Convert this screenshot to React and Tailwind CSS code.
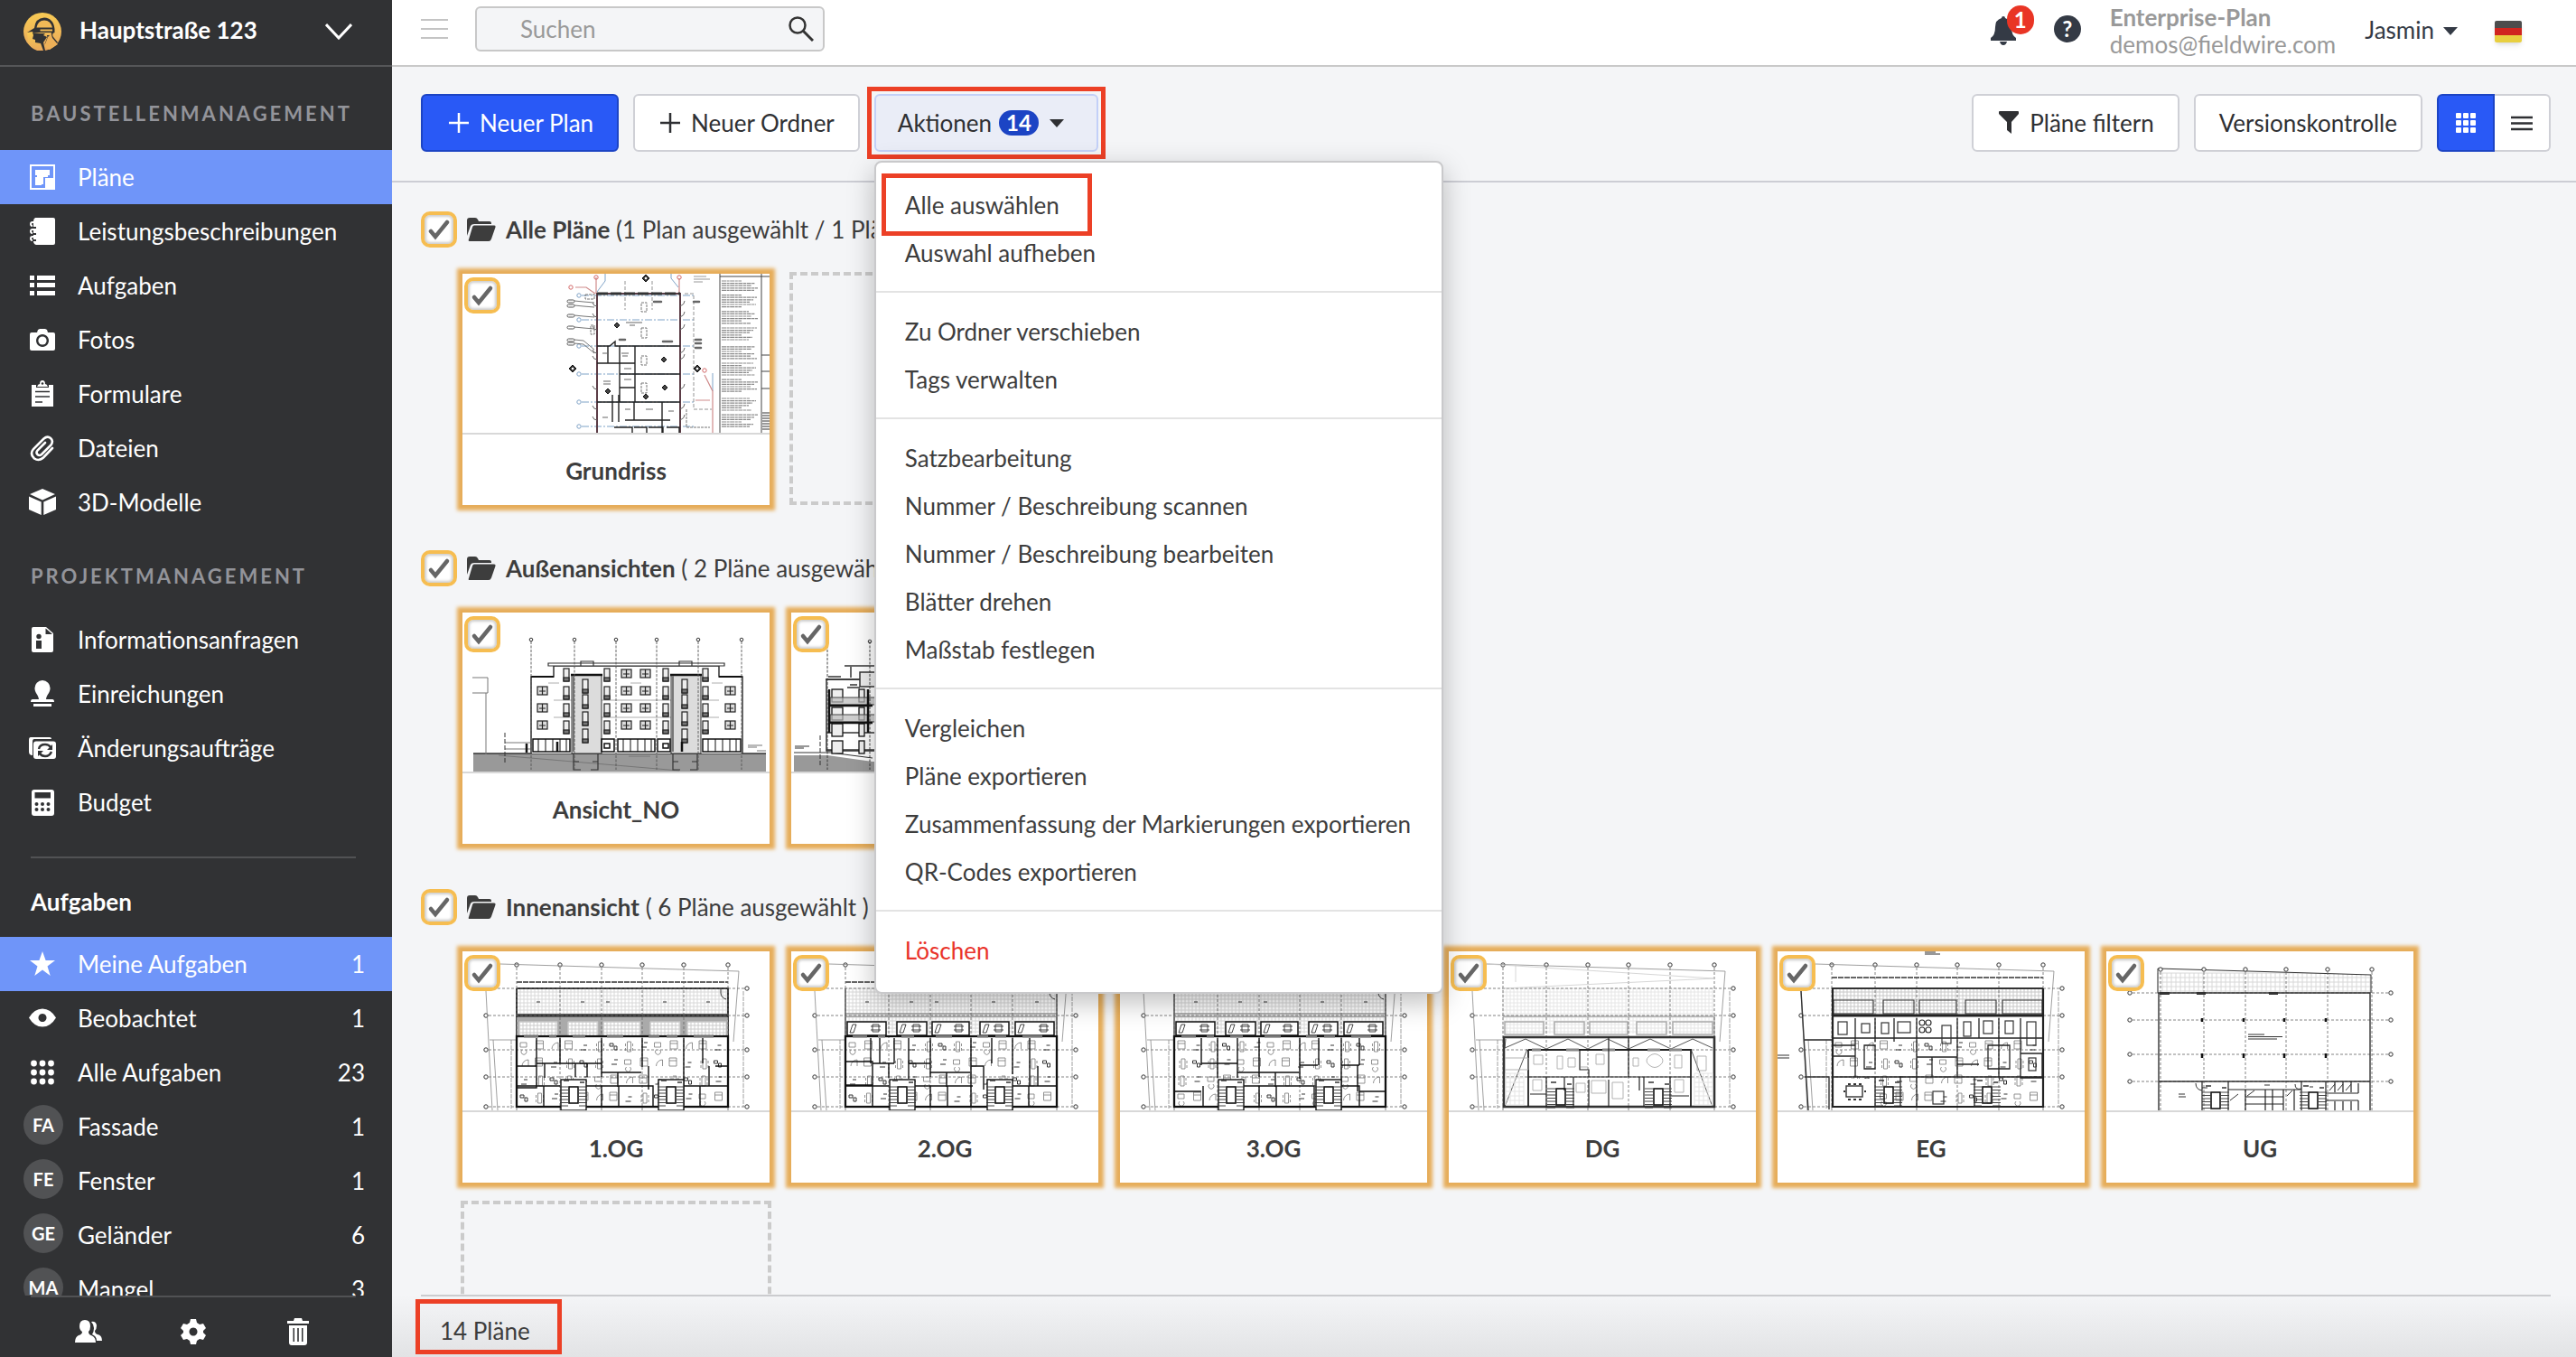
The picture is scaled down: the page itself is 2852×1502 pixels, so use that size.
import React, { useState } from "react";
import clsx from "clsx";

/* ---------- Icons ---------- */

function Icon({ children, className = "w-8 h-8" }) {
  return (
    <svg viewBox="0 0 32 32" fill="currentColor" className={clsx("shrink-0", className)} aria-hidden="true">
      {children}
    </svg>
  );
}

const PlansIcon = () => (
  <Icon>
    <path fillRule="evenodd" d="M2 2h28v28H2zM4 4v24h24V4z" />
    <path d="M8 8h16v6h-2v2h-5v8h-2v1H8v-9h2v-2H8zM19 28V17h10v12H17v-1z" />
  </Icon>
);

const SpecsIcon = () => (
  <Icon>
    <path d="M8 1h20q2 0 2 2v26q0 2-2 2H9q-3-1-3-4h3v-2H6v-5h3v-2H6v-5h3v-2H6V5q0-3 2-4z" />
    <path d="M9 6H5q-2 0-2 2t2 2M9 14H5q-2 0-2 2t2 2M9 22H5q-2 0-2 2t2 2" fill="none" stroke="currentColor" strokeWidth="2" />
  </Icon>
);

const TasksIcon = () => (
  <Icon>
    <path d="M2 5h5v5H2zM10 5h20v5H10zM2 13h5v5H2zM10 13h20v5H10zM2 22h5v5H2zM10 22h20v5H10z" />
  </Icon>
);

const CameraIcon = () => (
  <Icon>
    <path fillRule="evenodd" d="M4 8h6l1-3 2-1h6l2 1 1 3h6q2 0 2 2v16q0 2-2 2H4q-2 0-2-2V10q0-2 2-2zM16 10a7 7 0 1 0 .01 0z" />
    <circle cx="16" cy="17" r="4.6" />
  </Icon>
);

const FormsIcon = () => (
  <Icon>
    <path d="M4 6h5v3h14V6h5v24H4z" />
    <path d="M8 13.500h16M8 19h16M8 25h8" stroke="#313234" strokeWidth="1.600" />
    <path d="M10 8q1-3 3-3 0-4 3-4t3 4q2 0 3 3z" />
    <circle cx="16" cy="4.500" r="1.300" fill="#313234" />
  </Icon>
);

const ClipIcon = () => (
  <Icon>
    <path
      d="M27 16 17 26.500q-5 4.500-10 1-5.500-5-1-10.500L17.500 5.500q4-3.500 7.500-.500t.500 7.500L15 23q-2.500 2-4.500 0t0-4.500l8.500-8.500"
      fill="none"
      stroke="currentColor"
      strokeWidth="2.6"
      strokeLinecap="round"
    />
  </Icon>
);

const CubeIcon = () => (
  <Icon>
    <path d="M16 1 30 7 16 13.500 2 7zM1 9.500 14.700 15.500V30L1 24zM31 9.500 17.300 15.500V30L31 24z" />
  </Icon>
);

const InfoFileIcon = () => (
  <Icon>
    <path fillRule="evenodd" d="M6 2h14l8 7v19q0 2-2 2H6q-2 0-2-2V4q0-2 2-2zM19.500 3.500V10H27zM9 17h6v9H9z" />
    <circle cx="12" cy="12.500" r="2.700" fill="#313234" />
  </Icon>
);

const StampIcon = () => (
  <Icon>
    <path d="M16 1a8.500 8.500 0 0 1 8.500 9c0 5-4 7-4.500 12h7q2 0 2 3H3q0-3 2-3h7c-.5-5-4.500-7-4.500-12A8.500 8.500 0 0 1 16 1zM6 27h20v3H6z" />
  </Icon>
);

const ChangeIcon = () => (
  <Icon>
    <path d="M3 4h21q2 0 2 2H7Q5 6 5 9v15q-4 0-4-4V7q0-3 2-3z" />
    <rect x="6" y="8.500" width="25" height="19.500" rx="3" />
    <path d="M12 17q1-5 7-5 4 0 6 3M26 20q-2 5-7 5-4 0-6-3" fill="none" stroke="#313234" strokeWidth="2.400" />
    <path d="M27 12v6h-6zM11 25v-6h6z" fill="#313234" />
  </Icon>
);

const BudgetIcon = () => (
  <Icon>
    <rect x="4" y="2" width="25" height="29" rx="3" />
    <path d="M7.500 5h17.500v6.500H7.500z" fill="#313234" />
    {[18, 24].map((y) => [9.500, 16, 22.500].map((x) => <circle key={x + "-" + y} cx={x} cy={y} r="2" fill="#313234" />))}
  </Icon>
);

const StarIcon = () => (
  <Icon>
    <path d="m16 2 3.600 10H30l-8.500 6.500 3.200 10.500L16 22.500 7.300 29l3.200-10.500L2 12h10.400z" />
  </Icon>
);

const EyeIcon = () => (
  <Icon>
    <path fillRule="evenodd" d="M1 15.500Q7 5.500 16 5.500t15 10Q25 25.500 16 25.500t-15-10zM16 11a4.500 4.500 0 1 0 .01 0z" />
  </Icon>
);

const DotsIcon = () => (
  <Icon>
    {[6, 16, 26].map((y) => [6.500, 16, 25.500].map((x) => <circle key={x + "-" + y} cx={x} cy={y} r="3.400" />))}
  </Icon>
);

const FolderIcon = () => (
  <svg viewBox="0 0 32 26" className="w-8 h-[26px] shrink-0" fill="currentColor" aria-hidden="true">
    <path d="M0 20V3q0-3 3-3h6q2 0 3 2l1 2h12q2 0 2 2v1H8q-3 0-4 2zM8 8.500h22q2 0 1.500 2L27 23.500q-1 2.500-3 2.500H3q-2 0-1-2L6 10.500q.5-2 2-2z" />
  </svg>
);

const Logo = () => (
  <svg viewBox="0 0 42 42" className="w-[42px] h-[42px] shrink-0" aria-hidden="true">
    <defs>
      <linearGradient id="logoFill" x1="0" y1="0" x2="0" y2="1" gradientUnits="objectBoundingBox">
        <stop offset="0" stopColor="#f8cb54" />
        <stop offset="1" stopColor="#e9a75b" />
      </linearGradient>
    </defs>
    <circle cx="21" cy="21" r="21" fill="url(#logoFill)" />
    {/* helmet and face */}
    <path d="M4 22l8-5Q13 6 23 5.500q10 .5 11.500 12.500v4l-2 1-1 6-5 7-3-1 3-8-1-3H13q-2 0-3-3-2 0-6 1z" fill="#313234" />
    <path d="M14.500 16.500Q16 8.500 23 8.500t9 8zM18.500 18.500H32v2H18.500zM13 22h18l-1 3h-4l-3 2 1 3-3 3-8-5z" fill="#f0b957" />
    <path d="M4 22h9v10l8 1 1 5-3 5q-11-2-14-10z" fill="url(#logoFill)" />
    <path d="M10 22l1 3-1 4 3 1v3l6 1 3 8h2l-2-9 4-6-4-2 2-2h-6z" fill="#313234" />
    <path d="M27 27l4-4 1 5 6 7-9 6-6-4z" fill="#edb058" />
    <path d="M31 23l1 5 5 6 1-1-5-6z" fill="#313234" />
  </svg>
);

const Caret = ({ className }) => (
  <svg viewBox="0 0 16 9" className={clsx("w-4 h-[9px] shrink-0", className)} fill="currentColor" aria-hidden="true">
    <path d="M0 0h16L8 9z" />
  </svg>
);

const Plus = () => (
  <svg viewBox="0 0 22 22" className="w-[22px] h-[22px] shrink-0" stroke="currentColor" strokeWidth="2.500" aria-hidden="true">
    <path d="M11 0v22M0 11h22" />
  </svg>
);

/* ---------- Plan drawings (340 x 176) ---------- */

const rectPath = (x, y, w, h) => `M${x} ${y}h${w}v${h}h${-w}z`;

function Sheet({ children }) {
  return (
    <svg viewBox="0 0 340 176" className="block w-full" fill="none" stroke="#333" strokeWidth="1" aria-hidden="true">
      {children}
    </svg>
  );
}

function Hatch({ x, y, w, h, step = 4, color = "#d8d8d8" }) {
  let d = "";
  for (let i = x; i <= x + w; i += step) d += `M${i} ${y}v${h}`;
  for (let j = y; j <= y + h; j += step) d += `M${x} ${j}h${w}`;
  return <path d={d} stroke={color} strokeWidth="1" />;
}

const AXES_X = [60, 108, 154, 199, 245, 294];

// Axis lines, bubbles and property lines around each storey
function Axes({ top = 15, rows = [41, 71, 109, 139, 172], site = true }) {
  return (
    <>
      <g stroke="#666" strokeWidth="0.8" strokeDasharray="3 2">
        {AXES_X.map((x) => (
          <path key={x} d={`M${x} ${top + 3}V176`} />
        ))}
        {rows.map((y) => (
          <path key={y} d={`M29 ${y}H312`} />
        ))}
      </g>
      <g strokeWidth="1" fill="#fff">
        {AXES_X.map((x) => (
          <circle key={x} cx={x} cy={top} r="2.200" />
        ))}
        {rows.map((y) => (
          <circle key={y} cx="26" cy={y} r="2.200" />
        ))}
        {rows.map((y) => (
          <circle key={y} cx="315" cy={y} r="2.200" />
        ))}
      </g>
      {site && (
        <>
          <path d="M42 14 306 22 300 100M26 44l7 132M34 98l5 78M30 98h30" stroke="#888" strokeWidth="0.8" />
          <path d="M54 98v76M311 44v128" stroke="#888" strokeWidth="0.8" strokeDasharray="5 1" />
        </>
      )}
    </>
  );
}

function Stairs({ x, y = 150 }) {
  let d = "";
  for (let i = 0; i < 7; i++) d += `M${x} ${y + i * 3.500}h9M${x + 21} ${y + i * 3.500}h9`;
  return (
    <>
      <path d={d} strokeWidth="0.9" />
      <rect x={x + 10} y={y} width="10" height="18" strokeWidth="1.600" stroke="#111" />
      <path d={`M${x + 4} ${y - 7}h6M${x + 22} ${y - 5}h5`} strokeWidth="1.600" />
    </>
  );
}

// Small furniture: beds, tables with chairs, baths
function Furniture({ seed = 0 }) {
  let d = "";
  let dark = "";
  for (let r = 0; r < 4; r++) {
    for (let c = 0; c < 14; c++) {
      const k = (c * 7 + r * 5 + seed * 3) % 9;
      const x = 64 + c * 16.500 + (k % 3);
      const y = 99 + r * 19 + (k % 4);
      if (x > 284) continue;
      if (k === 0 || k === 4) d += rectPath(x, y, 8, 9) + `M${x} ${y + 3}h8`;
      else if (k === 1 || k === 5) d += rectPath(x + 2, y, 4, 11) + `M${x} ${y + 2}v3M${x} ${y + 7}v3M${x + 8} ${y + 2}v3M${x + 8} ${y + 7}v3`;
      else if (k === 2) d += `M${x} ${y + 7}a7 7 0 0 1 7-7v7`;
      else if (k === 3) dark += rectPath(x, y, 4, 3) + rectPath(x + 5, y + 3, 3, 4);
      else if (k === 6) d += `M${x} ${y}h7v5h-7zM${x + 2} ${y + 8}a3 3 0 1 0 4 0`;
      else dark += `M${x} ${y + 7}h6M${x + 3} ${y + 2}h4`;
    }
  }
  return (
    <>
      <path d={d} stroke="#777" strokeWidth="0.8" />
      <path d={dark} stroke="#333" strokeWidth="1" />
    </>
  );
}

const WALLS = {
  og1: "M82 96v45M108 96v28M154 96v43M199 96v32M245 96v76M266 96v28M60 127h22v24H60M82 124h72M91 124v16M125 124v15M138 124v15M154 134h44M172 134v16M206 127v26M60 149h48M90 149v23M137 149h64M154 149v23M173 149v23M199 149h12v23M216 146h28M245 149h48M263 149v23M273 127v22M280 127h13",
  og2: "M88 96v28M98 96v28M114 96v28M130 96v45M154 96v43M199 96v76M222 96v28M245 96v40M264 96v53M60 122h30v26H60M90 124h24M108 124v16M130 124h24M154 134h44M172 134v16M199 127h14v26M60 149h48M90 149v23M137 149h64M154 149v23M173 149v23M216 146h28M245 149h48M263 149v23M273 127v22",
  og3: "M90 96v30M108 96v44M130 96v44M154 96v43M199 96v45M220 96v30M245 96v53M265 96v30M90 124h18M108 124h22M130 134h24M154 134h44M172 134v16M199 126h20M245 126h20M92 149v23M60 155h30M137 149h64M154 149v23M173 149v23M199 149h16v23M245 149h20v23M265 155h28M263 126v29",
};

function StoreyPlan({ id }) {
  const first = id === "og1";
  const boxes = first
    ? [[63, 42], [117, 33], [156, 41], [208, 33], [249, 43]]
    : [[62, 43], [117, 33], [156, 41], [209, 32], [248, 43]];
  return (
    <Sheet>
      <Hatch x={60} y={41} w={234} h={50} />
      <path d="M60 34H294" strokeWidth="1.600" strokeDasharray="6 1" />
      <path d="M60 41V96M294 41V96" strokeWidth={first ? 2 : 1.2} />
      {first ? (
        <>
          <path d="M60 41H295" strokeWidth="2" />
          <rect x="60" y="73" width="234" height="21" fill="#aaa" stroke="none" />
          <path d="M60 71H295" stroke="#333" strokeWidth="3.500" />
          {boxes.map(([x, w]) => (
            <g key={x}>
              <rect x={x} y="78" width={w} height="16" fill="#fff" stroke="#bbb" />
              <Hatch x={x} y={78} w={w} h={16} color="#ccc" />
            </g>
          ))}
        </>
      ) : (
        <>
          <path d="M60 69H294M60 72H294" stroke="#777" />
          {boxes.map(([x, w]) => (
            <g key={x}>
              <rect x={x} y="78" width={w} height="15" fill="#fff" stroke="#111" strokeWidth="1.500" />
              <path d={`M${x + 6} 81l4 0-3 9-4 0zM${x + w - 15} 81h7v8h-7zM${x + w - 17} 83h11M${x + w - 17} 87h11`} strokeWidth="0.9" />
            </g>
          ))}
        </>
      )}
      <Axes />
      <path d="M286 41v5q0 5 6 7M82 56h4M131 56h4M159 56h4M222 56h4M270 56h4" />
      <Furniture seed={id.length + WALLS[id].length} />
      <path d={WALLS[id]} stroke="#111" strokeWidth="1.400" />
      <rect x="60" y="94" width="234" height="78" stroke="#111" strokeWidth="2.300" />
      <path d="M68 94h16M96 94h8M122 94h14M160 94h18M206 94h12M226 94h12M256 94h22" stroke="#777" strokeWidth="3" />
      <rect x="109" y="142" width="28" height="34" fill="#fff" stroke="#111" strokeWidth="1.400" />
      <rect x="217" y="142" width="28" height="34" fill="#fff" stroke="#111" strokeWidth="1.400" />
      <Stairs x={108} />
      <Stairs x={216} />
    </Sheet>
  );
}

function AtticPlan() {
  return (
    <Sheet>
      <Hatch x={60} y={41} w={234} h={50} color="#e6e6e6" />
      <path d="M60 72H294V94M62 78h43v14H62zM117 78h33v14h-33zM156 78h42v14h-42zM208 78h33v14h-33zM248 78h44v14h-44z" stroke="#aaa" strokeWidth="1.500" />
      <Axes />
      <path d="M42 14 294 30 60 41M74 14v20" stroke="#ccc" strokeWidth="0.8" />
      <rect x="61" y="95" width="233" height="77" strokeWidth="2.600" stroke="#333" />
      <path d="M63 97 62 107 85 97 108 108 132 97 154 108 176 97 199 108 223 97 246 108 270 97 292 107M62 172 87 108M292 172 268 108" stroke="#444" strokeWidth="0.9" />
      <path d="M88 109H268V172M88 109V172" stroke="#222" strokeWidth="1.800" />
      <path d="M92 109h10M130 109h14M170 109h14M220 109h14M244 109h14" stroke="#888" strokeWidth="3" />
      <path d="M145 109v22h10v8M177 95v44M199 95v44M88 139H268M108 139v34M138 139v33M155 142v30M177 142v30M216 139v33M245 139v33M128 139v15M211 139v15M90 158h18M246 160h20" stroke="#222" strokeWidth="1.200" />
      <path d="M62 118h26v13H62M94 115h10v10H94zM120 116h6v14h-6zM132 118h8v10h-8zM163 114h9v11h-9zM204 118h6v9h-6zM222 116q6-5 12 0t0 10-12 0 0-10zM250 115h8v14h-8zM275 116h10v16h-10zM146 128h8M158 143h16v14h-16zM181 145h12v18h-12zM250 142h10v14h-10zM93 142h10v12H93zM141 146h10v10h-10z" stroke="#aaa" strokeWidth="0.9" />
      <Hatch x={63} y={135} w={20} h={35} step={5} color="#e4e4e4" />
      <Hatch x={272} y={135} w={20} h={35} step={5} color="#e4e4e4" />
      <Stairs x={109} y={152} />
      <Stairs x={217} y={152} />
    </Sheet>
  );
}

function GroundFloorPlan() {
  return (
    <Sheet>
      <path d="M163 1h12M163 3h17M0 115h13M0 118h13" strokeWidth="1.200" />
      <Hatch x={61} y={41} w={233} h={30} color="#c8c8c8" />
      <path d="M60 29H294" strokeWidth="1.600" strokeDasharray="6 1" />
      <path d="M62 54h44v15H62zM117 54h34v15h-34zM157 54h41v15h-41zM208 54h34v15h-34zM249 54h44v15h-44z" strokeWidth="1.100" />
      <Axes rows={[41, 71, 109, 139, 172]} />
      <path d="M26 44 34 176M30 98h30M30 139h27v36" strokeWidth="1.400" />
      <path d="M60 41H294" strokeWidth="2" />
      <Furniture seed={2} />
      <path d="M86 74v30M108 74v26M129 74v26M154 74v98M199 74v65M223 74v22h22M245 74v60M269 74v40M60 96H294M60 104h26v35M96 104h12v26H96zM60 116h26M154 117h45M171 117v22M199 125h24M233 104h24v26h-24zM245 117v22M269 113h24v27h-24zM60 139H154M154 139h91M108 139v33M136 139v33M218 139v33M245 139h48" stroke="#222" strokeWidth="1.300" />
      <path d="M61 41V172H294V41" stroke="#222" strokeWidth="2.200" />
      <path d="M60 71H294" stroke="#222" strokeWidth="3" />
      <g strokeWidth="1.200">
        <rect x="67" y="78" width="10" height="14" />
        <rect x="93" y="80" width="9" height="10" />
        <rect x="115" y="79" width="8" height="12" />
        <rect x="133" y="78" width="14" height="12" />
        <rect x="182" y="82" width="10" height="20" />
        <rect x="206" y="78" width="8" height="16" />
        <rect x="228" y="77" width="10" height="14" />
        <rect x="252" y="77" width="9" height="14" />
        <rect x="276" y="78" width="10" height="26" />
        <rect x="278" y="118" width="8" height="14" />
        <rect x="172" y="155" width="12" height="14" />
        <ellipse cx="160" cy="79" rx="3" ry="3" />
        <ellipse cx="167" cy="79" rx="3" ry="3" />
        <ellipse cx="160" cy="87" rx="3" ry="3" />
        <ellipse cx="167" cy="87" rx="3" ry="3" />
      </g>
      <rect x="63" y="141" width="43" height="29" fill="#fff" stroke="none" />
      <rect x="76" y="149" width="18" height="12" strokeWidth="1.400" />
      <path d="M78 147h3M84 147h3M90 147h3M78 164h3M84 164h3M90 164h3M73 155h2M96 155h2" strokeWidth="2" />
      <Stairs x={108} />
      <Stairs x={217} />
    </Sheet>
  );
}

function BasementPlan() {
  return (
    <Sheet>
      <Hatch x={57} y={24} w={236} h={21} step={5} />
      <path d="M57 19V0h236v26z" fill="#fff" stroke="none" />
      <path d="M57 46V19L293 26V46" />
      <Axes top={20} rows={[46, 76, 114, 144]} site={false} />
      <path d="M57 46H292V176M58 46V176M58 144H292" strokeWidth="1.400" />
      <path d="M59 46.500h11M100 46.500h10M180 46.500h10" strokeWidth="3" />
      {[106, 152, 197, 243].map((x) => (
        <path key={x} d={`M${x} 74v4M${x} 113v5`} strokeWidth="2.500" stroke="#111" />
      ))}
      <path d="M157 92h18M157 94.500h38M157 97h32M80 158h7M80 161h8M175 148h6M106 151h6M225 150h4" strokeWidth="1.200" />
      <path d="M106 144v32M135 144v32M135 153H216M154 153v23M176 153v23M184 153v23M196 153v23M208 153v23M216 144v32M243 144v32M243 157h36M243 165h36M279 146v11M279 165v11M154 161h42M154 169h42M253 144v12M262 144v12M271 144v12M253 166v10M262 166v10M271 166v10" stroke="#222" strokeWidth="1.200" />
      <path d="M99 146q0 7 7 8M216 152q-7 2-7-5M137 165l9-7M156 160l8-6M200 160l6-6M247 154l6-7M256 154l6-7M265 154l6-7" />
      <Stairs x={106} y={156} />
      <Stairs x={214} y={156} />
    </Sheet>
  );
}

function SquareWindow({ x, y, w = 11 }) {
  return (
    <g stroke="#222" strokeWidth="1.200">
      <rect x={x} y={y} width={w} height="9" fill="#ddd" />
      <path d={`M${x + w / 2} ${y}v9M${x + 2} ${y + 5}h${w - 4}`} />
    </g>
  );
}

function TallWindow({ x, y, h = 14 }) {
  return (
    <g stroke="#222" strokeWidth="1.200">
      <rect x={x} y={y} width="6" height={h} fill="#eee" />
      <rect x={x} y={y + h - 4} width="6" height="4" fill="#777" />
    </g>
  );
}

function FacadeNorth() {
  return (
    <Sheet>
      <path d="M12 156H336V176H12z" fill="#999" stroke="none" />
      <path d="M12 156H336" strokeWidth="1.500" />
      <path d="M40 158 240 175M11 72h17v17H11M26 89v68M47 144h28M47 151h28M326 153h10M316 147h16M316 149h10M184 159h24" stroke="#777" />
      <path d="M47 133v34" strokeDasharray="5 2" />
      <rect x="76" y="72" width="234" height="84" fill="#fff" stroke="none" />
      <path d="M76 156V71H101V59H284V71H310V156" fill="#fff" strokeWidth="1.500" />
      <path d="M95 56H290V59H95zM131 54h14v5h-14zM240 54h14v5h-14z" fill="#fff" strokeWidth="1.200" />
      <path d="M76 71h25M284 71h26" stroke="#111" strokeWidth="2" />
      <path d="M101 97h20M154 97h77M154 116h77M101 116h20M264 97h20M264 116h20M95 78h12M186 78h12M276 78h12" stroke="#999" strokeWidth="0.8" />
      {[121, 231].map((x) => (
        <g key={x}>
          <rect x={x} y="69" width="33" height="87" fill="#dcdcdc" stroke="#333" />
          <path d={`M${x - 1} 69h35`} stroke="#111" strokeWidth="2.500" />
          <path d={`M${x + 2} 70v84`} strokeWidth="2" stroke="#777" />
          <path d={`M${x + 2} 156v18h8M${x + 29} 156v18h-8M${x + 2} 165h6M${x + 29} 165h-6`} strokeWidth="1.200" />
          {[74, 91, 110, 129].map((y) => (
            <TallWindow key={y} x={x + 12} y={y} h={15} />
          ))}
        </g>
      ))}
      {[112, 157, 222, 266].map((x) => [62, 82, 101, 120].map((y) => <TallWindow key={x + "-" + y} x={x} y={y} />))}
      {[83, 176, 197, 291].map((x) =>
        [63, 82, 101, 120].map((y) => (y === 63 && (x === 83 || x === 291) ? null : <SquareWindow key={x + "-" + y} x={x} y={y} />))
      )}
      {[[78, 41], [172, 41], [266, 42]].map(([x, w]) => (
        <g key={x} stroke="#111" strokeWidth="1.500">
          <rect x={x} y="140" width={w} height="14" fill="#fff" />
          <path d={`M${x + 6} 140v14M${x + 14} 140v14M${x + 22} 140v14M${x + 30} 140v14M${x + 37} 140v14`} strokeWidth="1" />
        </g>
      ))}
      <path d="M154 140h14v14h-14zM216 140h14v14h-14zM157 145h6v5h-6zM222 145h6v5h-6z" stroke="#111" strokeWidth="1.500" />
      <path d="M105 143v11M71 145v10M243 143v11" stroke="#111" strokeWidth="2.500" />
      <g stroke="#555" strokeWidth="0.9" strokeDasharray="3 1.500">
        {[76, 124, 170, 215, 261, 309].map((x) => (
          <path key={x} d={`M${x} 32V174`} />
        ))}
      </g>
      {[76, 124, 170, 215, 261, 309].map((x) => (
        <circle key={x} cx={x} cy="30" r="1.800" fill="#fff" />
      ))}
    </Sheet>
  );
}

function FacadeSouth() {
  return (
    <Sheet>
      <path d="M3 158 40 158 90 165H330V176H3z" fill="#999" stroke="none" />
      <path d="M3 155h40l47 6M4 148h16M4 150h10" />
      <path d="M32 136v34" strokeDasharray="5 2" />
      <path d="M39 153V74H300V153z" fill="#fff" strokeWidth="1.500" />
      <path d="M59 59H280M66 60v12M38 74h262M39 133h260M39 152h260M41 71h14M65 80h8M62 83h14" strokeWidth="1.500" />
      {[45, 75, 110, 150, 190, 230, 265].map((x) => (
        <g key={x}>
          {[85, 105, 123, 142].map((y) => (
            <rect key={y} x={x} y={y} width={x === 75 ? 6 : 12} height="14" fill="#eee" stroke="#111" strokeWidth="1.300" />
          ))}
        </g>
      ))}
      <rect x="76" y="66" width="20" height="16" fill="#eee" strokeWidth="1.500" />
      <path d="M43 94H96V102H43zM43 113H96V121H43z" fill="#bbb" fillOpacity="0.7" stroke="#444" />
      <path d="M42 85v48M85 85v48M42 103h48M42 122h48" stroke="#111" strokeWidth="2.500" />
      <path d="M40 32V174M87 32V174M140 32V174M200 32V174" strokeDasharray="3 1.500" strokeWidth="0.9" />
      <circle cx="87" cy="32" r="1.800" />
    </Sheet>
  );
}

function SitePlan() {
  const textRows = [];
  for (let y = 8; y < 174; y += 2.600) {
    if (Math.round(y) % 19 > 2) textRows.push(y);
  }
  return (
    <Sheet>
      {/* legend column */}
      <path d="M285 0V176M331 0V176M285 3h55M331 90h9M331 108h9M331 127h9" stroke="#444" />
      <g stroke="#8a8a8a" strokeWidth="1.200" strokeDasharray="5 0.600 3 0.600">
        {textRows.map((y, i) => (
          <path key={y} d={`M287 ${y}h${i % 5 === 0 ? 22 : 30 + ((i * 7) % 11)}`} />
        ))}
      </g>
      <path d="M332 154h8M332 157h8M332 160h8M332 163h8M332 166h8M332 169h8M332 172h8" stroke="#333" />
      <path d="M256 3h14M256 6h18M256 9h10" stroke="#999" />
      {/* axes */}
      <g stroke="#7fa3c7" strokeWidth="1" strokeDasharray="8 2 2 2">
        {[24, 51, 80, 111, 142, 169].map((y) => (
          <path key={y} d={`M132 ${y}H256`} />
        ))}
        <path d="M158 0v8l-9 12M231 0v5l8 10M277 110v20" strokeDasharray="0" />
      </g>
      <path d="M148 4v18M240 5v17M125 15h12l10 7M268 112l9 18v46M258 140h16" stroke="#cf8b8b" strokeWidth="1.200" />
      <g stroke="#7fa3c7">
        {[24, 51, 80, 111, 142, 169].map((y) => (
          <circle key={y} cx="129" cy={y} r="2.200" />
        ))}
      </g>
      <g stroke="#d46a6a">
        <circle cx="148" cy="4" r="2.200" />
        <circle cx="240" cy="4" r="2.200" />
        <circle cx="120" cy="15" r="2.200" />
        <circle cx="268" cy="107" r="2.200" />
      </g>
      <path d="M180 8v32M210 8v32M246 22h10v128h20" stroke="#888" strokeDasharray="4 2" strokeWidth="0.9" />
      {/* walls */}
      <path d="M149 176V22H241V176" stroke="#5b3d46" strokeWidth="2" />
      <path d="M149 22H241" stroke="#333" strokeWidth="3" strokeDasharray="12 3" />
      <path d="M149 80h14l6-5v5h72M161 80v19M149 99h26M174 80v62M191 80v62M174 99h17M174 111H241M174 126h17M149 142H241M166 134v30M173 134v30M190 142v20M221 142v34M180 162h50M168 170h20v6M190 170h14v6M206 170h16v6M226 170h14v6" stroke="#222" strokeWidth="1.400" />
      <path d="M198 32h6v10h-6zM198 60h6v11h-6zM198 91h6v10h-6zM198 121h6v11h-6zM136 23h10v5h-10zM142 57h4v10h-4zM248 150v20h26" stroke="#777" strokeDasharray="3 1" />
      {/* tags and leaders */}
      {[30, 35, 46, 59, 73, 77].map((y) => (
        <g key={y} stroke="#555">
          <rect x="116" y={y - 1} width="8" height="3" rx="1.500" />
          <path d={`M124 ${y}l10 1 12 ${y > 60 ? 10 : 1}`} strokeWidth="0.8" />
        </g>
      ))}
      <path d="M212 31h8M174 73h6M222 75h10M258 73h6M258 77h6M258 82h6M256 31h6" stroke="#666" strokeWidth="2.500" strokeLinecap="round" />
      <path d="M155 88h6M176 88h8M177 91h6M179 105h8M179 117h8M156 119h8M156 122h8M180 150h6M203 150h8M228 152h6M155 159h6M181 54h18M185 57h6" stroke="#666" strokeWidth="1.200" />
      {[36, 48, 62, 88, 95, 128, 150, 162].map((y) => (
        <path key={y} d={`M241 ${y}q5-2 5-6M149 ${y}q-4 0-5-4`} stroke="#666" />
      ))}
      {[[171, 57], [223, 95], [224, 126], [203, 136], [161, 130]].map(([x, y]) => (
        <path key={x + "-" + y} d={`M${x - 3} ${y}l3-3 3 3-3 3z`} fill="#444" stroke="#111" />
      ))}
      {[[203, 5], [122, 105], [260, 105]].map(([x, y]) => (
        <g key={x + "-" + y} stroke="#111">
          <path d={`M${x - 4} ${y}l4-4 4 4-4 4z`} fill="#444" />
          <circle cx={x} cy={y} r="2" fill="#fff" />
        </g>
      ))}
    </Sheet>
  );
}

/* ---------- Data ---------- */

const siteItems = [
  { label: "Pläne", icon: PlansIcon, active: true },
  { label: "Leistungsbeschreibungen", icon: SpecsIcon },
  { label: "Aufgaben", icon: TasksIcon },
  { label: "Fotos", icon: CameraIcon },
  { label: "Formulare", icon: FormsIcon },
  { label: "Dateien", icon: ClipIcon },
  { label: "3D-Modelle", icon: CubeIcon },
];

const projectItems = [
  { label: "Informationsanfragen", icon: InfoFileIcon },
  { label: "Einreichungen", icon: StampIcon },
  { label: "Änderungsaufträge", icon: ChangeIcon },
  { label: "Budget", icon: BudgetIcon },
];

const taskItems = [
  { label: "Meine Aufgaben", icon: StarIcon, count: 1, active: true },
  { label: "Beobachtet", icon: EyeIcon, count: 1 },
  { label: "Alle Aufgaben", icon: DotsIcon, count: 23 },
  { label: "Fassade", code: "FA", count: 1 },
  { label: "Fenster", code: "FE", count: 1 },
  { label: "Geländer", code: "GE", count: 6 },
  { label: "Mangel", code: "MA", count: 3 },
];

const menuGroups = [
  ["Alle auswählen", "Auswahl aufheben"],
  ["Zu Ordner verschieben", "Tags verwalten"],
  [
    "Satzbearbeitung",
    "Nummer / Beschreibung scannen",
    "Nummer / Beschreibung bearbeiten",
    "Blätter drehen",
    "Maßstab festlegen",
  ],
  ["Vergleichen", "Pläne exportieren", "Zusammenfassung der Markierungen exportieren", "QR-Codes exportieren"],
  ["Löschen"],
];

const folders = [
  {
    name: "Alle Pläne",
    info: "(1 Plan ausgewählt / 1 Pläne)",
    plans: [{ id: 1, name: "Grundriss", drawing: <SitePlan /> }],
  },
  {
    name: "Außenansichten",
    info: "( 2 Pläne ausgewählt )",
    plans: [
      { id: 2, name: "Ansicht_NO", drawing: <FacadeNorth /> },
      { id: 3, drawing: <FacadeSouth /> },
    ],
  },
  {
    name: "Innenansicht",
    info: "( 6 Pläne ausgewählt )",
    plans: [
      { id: 4, name: "1.OG", drawing: <StoreyPlan id="og1" /> },
      { id: 5, name: "2.OG", drawing: <StoreyPlan id="og2" /> },
      { id: 6, name: "3.OG", drawing: <StoreyPlan id="og3" /> },
      { id: 7, name: "DG", drawing: <AtticPlan /> },
      { id: 8, name: "EG", drawing: <GroundFloorPlan /> },
      { id: 9, name: "UG", drawing: <BasementPlan /> },
    ],
  },
];

/* ---------- Sidebar ---------- */

function NavItem({ item }) {
  const ItemIcon = item.icon;
  return (
    <a
      href="#"
      className={clsx("flex items-center h-15 shrink-0 pr-[30px]", item.active ? "bg-[#6f95f9]" : "hover:bg-white/5")}
    >
      <span className="w-[86px] pl-[31px] shrink-0 flex">
        {item.code ? (
          <span className="-ml-[5px] -mt-[5px] w-11 h-11 rounded-full bg-[#515254] text-xl font-bold flex items-center justify-center">
            {item.code}
          </span>
        ) : (
          <ItemIcon />
        )}
      </span>
      <span className="flex-1">{item.label}</span>
      {item.count !== undefined && <span>{item.count}</span>}
    </a>
  );
}

function Sidebar() {
  return (
    <aside className="w-[434px] shrink-0 flex flex-col bg-[#313234] text-white">
      <button type="button" className="h-[74px] shrink-0 border-b-2 border-[#555658] flex items-center pl-[26px] pr-11 pb-0.5 text-left">
        <Logo />
        <span className="flex-1 pl-5 pb-1 font-bold">Hauptstraße 123</span>
        <svg viewBox="0 0 30 18" className="w-[30px] h-[18px]" fill="none" stroke="currentColor" strokeWidth="3" aria-hidden="true">
          <path d="M1 1l14 15L29 1" />
        </svg>
      </button>

      <nav className="flex-1 min-h-0 overflow-hidden flex flex-col">
        <h2 className="pl-[34px] pt-10 pb-7 text-[22px] leading-6 font-bold tracking-[3px] text-[#93949a]">
          BAUSTELLENMANAGEMENT
        </h2>
        {siteItems.map((item) => (
          <NavItem key={item.label} item={item} />
        ))}
        <h2 className="pl-[34px] pt-10 pb-7 text-[22px] leading-6 font-bold tracking-[3px] text-[#93949a]">
          PROJEKTMANAGEMENT
        </h2>
        {projectItems.map((item) => (
          <NavItem key={item.label} item={item} />
        ))}
        <div className="mt-[30px] ml-[34px] mr-10 border-t-2 border-[#515254]" />
        <h2 className="pl-[34px] pt-8 pb-[23px] leading-8 font-bold">Aufgaben</h2>
        {taskItems.map((item) => (
          <NavItem key={item.label} item={item} />
        ))}
      </nav>

      <div className="ml-[34px] mr-10 border-t-2 border-[#515254]" />
      <div className="h-[66px] shrink-0 flex items-center justify-between pl-[82px] pr-[88px] pt-2.5">
        <button type="button" aria-label="Personen">
          <Icon>
            <path d="M19 5q5-1 6 4 0 4-2 6 0 3 3 4 5 1 5 7h-6q0-5-5-7 2-3 2-7t-3-7z" />
            <path d="M12 3q6 0 6 7 0 4-2 6 0 3 3 4 5 2 5 8H1q0-6 4-8 4-1 4-4-3-2-3-6 0-7 6-7z" />
          </Icon>
        </button>
        <button type="button" aria-label="Einstellungen">
          <Icon>
            <path
              fillRule="evenodd"
              d="M13 2h6l1 4 3 2 4-1 3 5-3 3v2l3 3-3 5-4-1-3 2-1 4h-6l-1-4-3-2-4 1-3-5 3-3v-2l-3-3 3-5 4 1 3-2zM16 11.500a4.500 4.500 0 1 0 .01 0z"
            />
          </Icon>
        </button>
        <button type="button" aria-label="Papierkorb">
          <Icon>
            <path
              fillRule="evenodd"
              d="M4 4h7l1-3h8l1 3h7v3H4zM6 9h20v19q0 3-3 3H9q-3 0-3-3zM10.500 12v15H12V12zM15.200 12v15h1.600V12zM20 12v15h1.500V12z"
            />
          </Icon>
        </button>
      </div>
    </aside>
  );
}

/* ---------- Header and toolbar ---------- */

function Header() {
  return (
    <header className="h-[74px] shrink-0 bg-white border-b-2 border-[#c9c9c9] flex items-center pl-8 pr-15">
      <button type="button" aria-label="Menü" className="w-[30px] h-[22px] flex flex-col justify-between -mt-2">
        <span className="block w-full h-0.5 bg-[#c4c4c4]" />
        <span className="block w-full h-0.5 bg-[#c4c4c4]" />
        <span className="block w-full h-0.5 bg-[#c4c4c4]" />
      </button>
      <div className="ml-[30px] -mt-2 w-[387px] h-[50px] rounded-md border-2 border-[#c8c8c8] bg-[#f4f5f7] flex items-center">
        <input
          type="search"
          aria-label="Suchen"
          placeholder="Suchen"
          className="flex-1 min-w-0 pl-12 bg-transparent outline-none placeholder:text-[#999]"
        />
        <svg viewBox="0 0 28 28" className="w-7 h-7 mr-2.5" fill="none" stroke="#333" aria-hidden="true">
          <circle cx="10" cy="10" r="8.500" strokeWidth="2.500" />
          <path d="M16 16l11 11" strokeWidth="3" />
        </svg>
      </div>

      <div className="ml-auto flex items-center text-[#343a45]">
        <button type="button" aria-label="Benachrichtigungen" className="relative mr-[42px] -mt-1">
          <svg viewBox="0 0 28 32" className="w-7 h-8" fill="currentColor" aria-hidden="true">
            <path d="M14 0q2 0 2 2 7 2 7 10 0 9 5 12v3H0v-3q5-3 5-12 0-8 7-10 0-2 2-2zM10 28h8q-1 4-4 4t-4-4z" />
          </svg>
          <span className="absolute -top-3 left-[18px] w-[30px] h-8 rounded-full bg-[#e93525] text-white text-2xl leading-8 font-bold">
            1
          </span>
        </button>
        <button type="button" aria-label="Hilfe" className="mr-8 -mt-2 w-[30px] h-[30px] rounded-full bg-[#343a45] text-white text-2xl leading-[30px] font-bold">
          ?
        </button>
        <div className="mr-8 -mt-1 leading-[30px] text-[#999]">
          <div className="font-bold">Enterprise-Plan</div>
          <div>demos@fieldwire.com</div>
        </div>
        <button type="button" className="mr-[41px] -mt-1.5 flex items-center gap-2.5">
          Jasmin
          <Caret className="mt-0.5" />
        </button>
        <button type="button" aria-label="Deutsch" className="-mt-0.5">
          <span className="block w-[30px] h-6 rounded-xs overflow-hidden shadow-md">
            <span className="block h-2 bg-[#4c4c4c]" />
            <span className="block h-2 bg-[#d0251f]" />
            <span className="block h-2 bg-[#e8cf3f]" />
          </span>
        </button>
      </div>
    </header>
  );
}

function ActionsMenu() {
  return (
    <div
      role="menu"
      className="absolute left-0 top-full mt-[10px] z-20 w-max min-w-[630px] py-5 bg-white border-2 border-[#c9c9cb] rounded-lg shadow-[0_10px_30px_rgba(0,0,0,0.25)]"
    >
      {menuGroups.map((group, i) => (
        <div key={group[0]} className={clsx(i > 0 && "mt-4 pt-4 border-t-2 border-[#e3e3e3]")}>
          {group.map((label) => (
            <div key={label} className="relative">
              <button
                type="button"
                role="menuitem"
                className={clsx(
                  "block w-full h-[53px] px-8 text-left hover:bg-gray-50",
                  label === "Löschen" ? "text-[#e9332a]" : "text-[#3d3d3d]"
                )}
              >
                {label}
              </button>
              {label === "Alle auswählen" && (
                <span className="pointer-events-none absolute left-[6px] -top-2 w-[233px] h-[69px] border-5 border-[#ec4026]" />
              )}
            </div>
          ))}
        </div>
      ))}
    </div>
  );
}

const toolButton = "h-16 rounded-md border-2 flex items-center";

function Toolbar({ menuOpen, onToggleMenu, view, setView }) {
  return (
    <div className="h-32 shrink-0 border-b-2 border-[#cccdd4] flex items-center pl-8 pr-7 pb-0.5 text-[#2f3033]">
      <button type="button" className={clsx(toolButton, "mr-4 pl-[29px] pr-[26px] gap-3 bg-[#2959f6] border-[#1c44c4] text-white")}>
        <Plus />
        Neuer Plan
      </button>
      <button type="button" className={clsx(toolButton, "mr-4 pl-7 pr-[26px] gap-3 bg-white border-[#cfd0d6]")}>
        <Plus />
        Neuer Ordner
      </button>
      <div className="relative">
        <button
          type="button"
          aria-haspopup="menu"
          aria-expanded={menuOpen}
          onClick={onToggleMenu}
          className={clsx(toolButton, "pl-6 pr-9 bg-[#eaedf7] border-[#c3d0f8]")}
        >
          Aktionen
          <span className="ml-2 px-2 h-7 rounded-full bg-[#1c44c4] text-white text-2xl leading-7 font-bold">14</span>
          <Caret className="ml-3" />
        </button>
        <span className="pointer-events-none absolute -inset-2 border-5 border-[#ec4026]" />
        {menuOpen && <ActionsMenu />}
      </div>

      <button type="button" className={clsx(toolButton, "ml-auto mr-4 pl-7 pr-[26px] gap-3 bg-white border-[#cfd0d6]")}>
        <svg viewBox="0 0 22 26" className="w-[22px] h-[26px]" fill="currentColor" aria-hidden="true">
          <path d="M1 0h20q1 0 1 1v2l-8 9v13l-5-4v-9L0 3V1q0-1 1-1z" />
        </svg>
        Pläne filtern
      </button>
      <button type="button" className={clsx(toolButton, "mr-4 px-[26px] bg-white border-[#cfd0d6]")}>
        Versionskontrolle
      </button>
      <button
        type="button"
        aria-label="Rasteransicht"
        aria-pressed={view === "grid"}
        onClick={() => setView("grid")}
        className="h-16 w-16 rounded-l-md border-2 bg-[#2959f6] border-[#1c44c4] text-white flex items-center justify-center"
      >
        <svg viewBox="0 0 22 22" className="w-[22px] h-[22px]" fill="currentColor" aria-hidden="true">
          {[0, 8, 16].map((y) => [0, 8, 16].map((x) => <rect key={x + "-" + y} x={x} y={y} width="6" height="6" rx="1" />))}
        </svg>
      </button>
      <button
        type="button"
        aria-label="Listenansicht"
        aria-pressed={view === "list"}
        onClick={() => setView("list")}
        className="h-16 w-[62px] rounded-r-md border-2 border-l-0 bg-white border-[#cfd0d6] flex items-center justify-center"
      >
        <svg viewBox="0 0 24 17" className="w-6 h-[17px]" stroke="currentColor" strokeWidth="2.500" aria-hidden="true">
          <path d="M0 2h24M0 8.500h24M0 15h24" />
        </svg>
      </button>
    </div>
  );
}

/* ---------- Plan list ---------- */

function Checkbox({ label, className }) {
  const [checked, setChecked] = useState(true);
  return (
    <label className={clsx("block w-10 h-10 shrink-0", className)}>
      <input
        type="checkbox"
        aria-label={label}
        checked={checked}
        onChange={() => setChecked(!checked)}
        className="appearance-none block w-10 h-10 rounded-[10px] border-4 border-[#f6bd51] bg-white shadow-[inset_0_0_3px_2px_#ccc]"
      />
      {checked && (
        <svg viewBox="0 0 40 40" className="absolute inset-0" fill="none" stroke="#666" strokeWidth="4.500" strokeLinecap="round" aria-hidden="true">
          <path d="M11 22l5 6 13-16" />
        </svg>
      )}
    </label>
  );
}

function PlanCard({ plan }) {
  return (
    <article className="relative w-[344px] h-65 border-2 border-[#e6ad5a] bg-white shadow-[0_0_4px_4px_#e6ad5a]">
      <div className="border-b-2 border-[#d8d8d8]">{plan.drawing}</div>
      {plan.name && <h3 className="h-[78px] flex items-center justify-center pt-0.5 font-bold">{plan.name}</h3>}
      <Checkbox label={plan.name || "Plan"} className="absolute left-0.5 top-1" />
    </article>
  );
}

function Folder({ folder }) {
  return (
    <section className="mb-12">
      <div className="flex items-center mb-[27px]">
        <Checkbox label={folder.name} className="relative" />
        <span className="ml-[11px] mr-[11px]">
          <FolderIcon />
        </span>
        <h2>
          <span className="font-bold">{folder.name}</span> {folder.info}
        </h2>
      </div>
      <div className="flex flex-wrap gap-x-5 gap-y-[18px] pl-11">
        {folder.plans.map((plan) => (
          <PlanCard key={plan.id} plan={plan} />
        ))}
        <div className="w-[344px] h-[258px] border-4 border-dashed border-[#cbcbcb]" />
      </div>
    </section>
  );
}

export default function App() {
  const [menuOpen, setMenuOpen] = useState(true);
  const [view, setView] = useState("grid");

  return (
    <div className="flex h-screen overflow-hidden bg-[#f4f5f7] font-['Lato',sans-serif] text-[26px] leading-8 text-[#3d3d3d]">
      <Sidebar />
      <div className="flex-1 min-w-0 flex flex-col">
        <Header />
        <Toolbar menuOpen={menuOpen} onToggleMenu={() => setMenuOpen(!menuOpen)} view={view} setView={setView} />
        <main className="flex-1 min-h-0 overflow-hidden pt-8 pl-8 pr-36">
          {folders.map((folder) => (
            <Folder key={folder.name} folder={folder} />
          ))}
        </main>
        <footer className="h-[69px] shrink-0 bg-linear-to-b from-transparent to-[#e2e3e5]">
          <div className="ml-8 mr-7 border-t-2 border-[#cbcccf]" />
          <div className="ml-[26px] mt-[3px] w-[162px] h-[61px] border-5 border-[#ec4026] flex items-center pl-[22px] pt-2">
            14 Pläne
          </div>
        </footer>
      </div>
    </div>
  );
}
